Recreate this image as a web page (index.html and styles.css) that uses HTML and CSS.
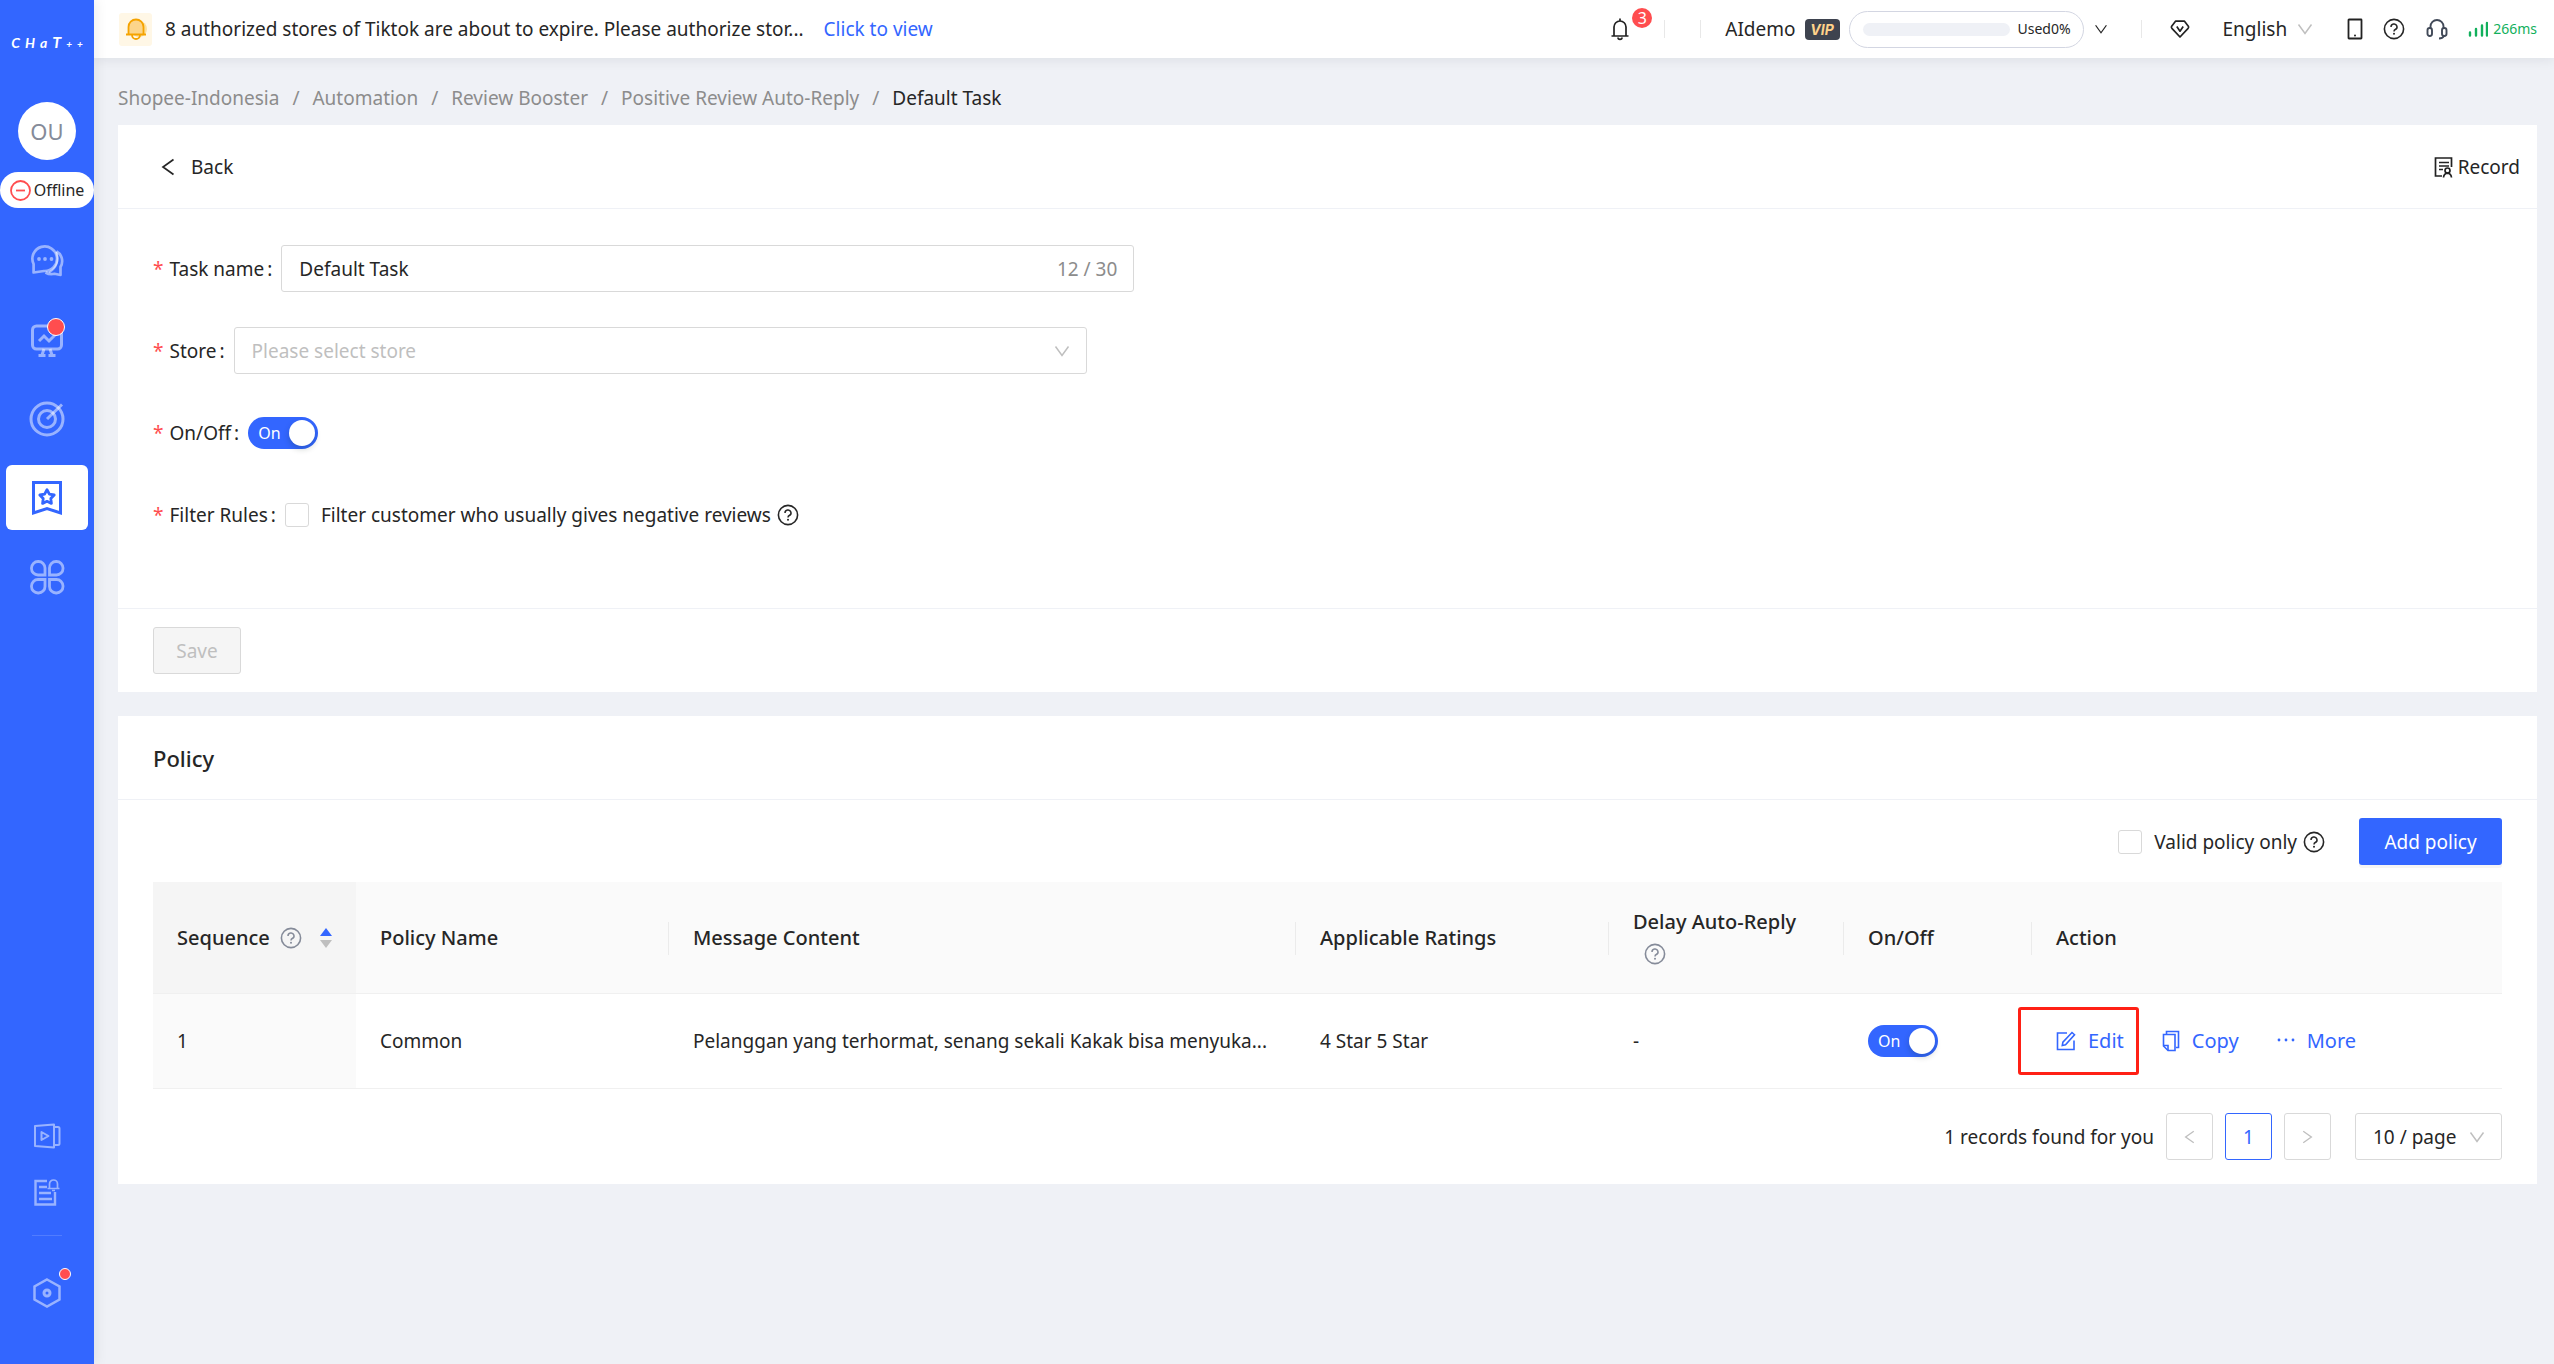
FILE: index.html
```html
<!DOCTYPE html>
<html lang="en">
<head>
<meta charset="utf-8">
<title>Default Task</title>
<link rel="stylesheet" href="styles.css">
</head>
<body>
<svg class="defs" aria-hidden="true">
  <symbol id="i-question" viewBox="0 0 22 22"><circle cx="11" cy="11" r="9.6" fill="none" stroke="currentColor" stroke-width="1.6"/><path d="M8 9a3 2.9 0 1 1 4.3 2.5c-.9.5-1.3.9-1.3 1.9" fill="none" stroke="currentColor" stroke-width="1.5"/><circle cx="11" cy="15.8" r="1" fill="currentColor"/></symbol>
  <symbol id="i-down" viewBox="0 0 16 12"><path d="M1.500 1.500 8 10.500 14.500 1.500" fill="none" stroke="currentColor" stroke-width="1.500"/></symbol>
  <symbol id="i-left" viewBox="0 0 14 18"><path d="M12.500 1.500 2 9l10.500 7.500" fill="none" stroke="currentColor" stroke-width="1.700"/></symbol>
</svg>
<div class="app">
  <nav class="side" aria-label="Main">
    <div class="logo"><span>C</span><span>H</span><span>a</span><span class="big">T</span><span class="plus">+</span><span class="plus">+</span></div>
    <div class="avatar">OU</div>
    <button class="status"><svg width="21" height="21" viewBox="0 0 21 21"><circle cx="10.500" cy="10.500" r="9.500" fill="none" stroke="#ff4d4f" stroke-width="1.800"/><path d="M6 10.500h9" stroke="#ff4d4f" stroke-width="1.800"/></svg>Offline</button>
    <div class="menu">
      <a href="#chat" aria-label="Chat"><svg width="36" height="36" viewBox="0 0 36 36" fill="none" stroke="currentColor" stroke-width="2.700" stroke-linejoin="round"><path d="M4.600 29.500V21A12.300 12.300 0 1 1 15 28z"/><path d="M27.500 8.500c5 2.500 7.500 9.500 4 15.500v8l-6-1.200c-3.500.8-6.500.2-9-1.300"/><path d="M27 9c3.500 7 1 16-7 20.500" stroke-width="2"/><g fill="currentColor" stroke="none"><circle cx="10" cy="16" r="1.900"/><circle cx="16" cy="16" r="1.900"/><circle cx="22.500" cy="16" r="1.900"/></g></svg></a>
      <a href="#monitor" aria-label="Monitor"><svg width="36" height="36" viewBox="0 0 36 36" fill="none" stroke="currentColor" stroke-width="3"><rect x="3.500" y="4" width="29" height="23" rx="4"/><path d="M10 19l5-5 5 5 6-6"/><path d="M15 27l-2 6M21 27l2 6M9.500 33.500h7M19.500 33.500h7"/></svg><span class="dot"></span></a>
      <a href="#target" aria-label="Target"><svg width="36" height="36" viewBox="0 0 36 36" fill="none" stroke="currentColor" stroke-width="3"><circle cx="18" cy="18" r="16"/><circle cx="18" cy="18" r="8.500"/><path d="M18 18 33 3.500"/></svg></a>
      <a href="#review" class="on" aria-label="Review"><svg width="36" height="36" viewBox="0 0 36 36" fill="none" stroke="currentColor" stroke-width="3"><path d="M4.500 2.500h27v30.500L18 28.500 4.500 33z"/><path d="M18 9.800l2.400 4.300 4.800.9-3.400 3.500.6 4.900-4.400-2.100-4.400 2.100.6-4.900-3.400-3.500 4.800-.9z" stroke-width="2.800" stroke-linejoin="round"/></svg></a>
      <a href="#apps" aria-label="Apps"><svg width="36" height="36" viewBox="0 0 36 36" fill="none" stroke="currentColor" stroke-width="2.800"><path d="M16 16H9A6.500 6.500 0 0 1 2.500 9.500V9A6.500 6.500 0 0 1 9 2.500h.5A6.500 6.500 0 0 1 16 9zM20.500 16h7A6.500 6.500 0 0 0 34 9.500V9A6.500 6.500 0 0 0 27.500 2.500H27A6.500 6.500 0 0 0 20.500 9zM16 20.500H9A6.500 6.500 0 0 0 2.500 27v.5A6.500 6.500 0 0 0 9 34h.5A6.500 6.500 0 0 0 16 27.500zM20.500 20.500h7A6.500 6.500 0 0 1 34 27v.5A6.500 6.500 0 0 1 27.500 34H27A6.500 6.500 0 0 1 20.500 27.500z"/></svg></a>
    </div>
    <div class="tools">
      <a href="#video" aria-label="Video"><svg width="28" height="28" viewBox="0 0 28 28" fill="none" stroke="currentColor" stroke-width="2" stroke-linejoin="round"><path d="M2 4l19-1.500v23L2 24zM21 5h4q1.500 0 1.500 1.500v15q0 1.500-1.500 1.500h-4M8.500 10v8l7-4z"/></svg></a>
      <a href="#news" aria-label="News"><svg width="28" height="28" viewBox="0 0 28 28" fill="none" stroke="currentColor" stroke-width="2.400"><path d="M14 3H2.500v23.500H22V14M6 9h8M6 15h12M6 21h13"/><path d="M14.500 10.500h12M16.500 10V6a4 4 0 0 1 8 0v4M19 12.500h3" stroke-width="1.700"/></svg></a>
      <hr>
      <a href="#settings" aria-label="Settings"><svg width="30" height="32" viewBox="0 0 30 32" fill="none" stroke="currentColor" stroke-width="2.500"><path d="M15 2.500 27.500 9.500v13L15 29.500 2.500 22.500v-13z"/><circle cx="15" cy="16" r="3" stroke-width="3"/></svg><span class="dot small"></span></a>
    </div>
  </nav>
  <div class="body">
    <header class="top">
      <span class="alert"><svg width="24" height="24" viewBox="0 0 24 24"><circle cx="15" cy="12" r="8" fill="#fcdf9c"/><path d="M4.500 17V10a7.500 7.500 0 0 1 15 0v7" fill="#fcd58a" stroke="#f5a300" stroke-width="1.800"/><path d="M2 17.500h20M8 18a4 4 0 0 0 8 0" fill="none" stroke="#f5a300" stroke-width="1.800"/></svg></span>
      <p class="notice">8 authorized stores of Tiktok are about to expire. Please authorize stor...</p>
      <a class="view" href="#expire">Click to view</a>
      <div class="right">
        <button class="bell" aria-label="Notifications"><svg width="20" height="24" viewBox="0 0 20 24" fill="none" stroke="#222" stroke-width="1.700"><path d="M4 18.500V10a6 6 0 0 1 12 0v8.500M1.500 19h17M10 1.500V4M8 20.500a2 1.800 0 0 0 4 0"/></svg><span class="count">3</span></button>
        <i class="bar"></i><i class="bar"></i>
        <span class="user">AIdemo</span><span class="vip">VIP</span>
        <button class="usage"><span class="track"></span>Used0%</button>
        <svg class="caret" width="14" height="10"><use href="#i-down"/></svg>
        <i class="bar"></i>
        <svg class="gem" width="20" height="20" viewBox="0 0 20 20" fill="none" stroke="#222" stroke-width="1.700" stroke-linejoin="round"><path d="M5.500 2.200h9l4 5.300q.3 1-.4 1.800L10 18 1.900 9.300q-.7-.8-.4-1.800z"/><path d="M6.800 7.500 10 12.200l3.200-4.700"/></svg>
        <button class="lang">English<svg width="16" height="12"><use href="#i-down"/></svg></button>
        <svg class="phone" width="16" height="22" viewBox="0 0 16 22"><rect x="1.500" y="1.500" width="13" height="19" rx=".5" fill="none" stroke="#222" stroke-width="1.800"/><circle cx="8" cy="17.500" r="1" fill="#222"/></svg>
        <svg class="help" width="22" height="22"><use href="#i-question"/></svg>
        <svg class="head" width="22" height="22" viewBox="0 0 22 22" fill="none" stroke="#414958" stroke-width="1.900"><path d="M4.500 10V8.500a6.500 6.500 0 0 1 13 0V10"/><rect x="1.500" y="10" width="4.500" height="8" rx="2.200"/><rect x="16" y="10" width="4.500" height="8" rx="2.200"/><path d="M18 18q-1.500 2.500-5 2.500"/></svg>
        <span class="ping"><svg width="20" height="16" viewBox="0 0 20 16" stroke="#12b05c" stroke-width="2.400" stroke-linecap="round"><path d="M2 11.500v3M8 8v6.500M14 4.500v10M19 2v12.500"/></svg>266ms</span>
      </div>
    </header>
    <main class="main">
      <nav class="crumbs" aria-label="Breadcrumb"><a href="#s">Shopee-Indonesia</a><i>/</i><a href="#a">Automation</a><i>/</i><a href="#r">Review Booster</a><i>/</i><a href="#p">Positive Review Auto-Reply</a><i>/</i><b>Default Task</b></nav>
      <section class="card">
        <div class="bar-top">
          <button class="back"><svg width="14" height="18"><use href="#i-left"/></svg>Back</button>
          <button class="record"><svg width="20" height="22" viewBox="0 0 20 22" fill="none" stroke="#222" stroke-width="1.700"><path d="M8 20H1.500V2h16v9M5 6.500h10M5 10h10M5 13.500h4"/><circle cx="13.500" cy="14.500" r="2.500"/><path d="M9.500 21.500q.5-4 4-4.300 3.500.3 4 4.300"/></svg>Record</button>
        </div>
        <form class="form">
          <div class="field"><label for="task"><em>*</em>Task name<s>:</s></label><span class="box"><input id="task" type="text" value="Default Task"><span class="hint">12 / 30</span></span></div>
          <div class="field"><label for="store"><em>*</em>Store<s>:</s></label><span class="box"><select id="store"><option>Please select store</option></select><svg width="16" height="12"><use href="#i-down"/></svg></span></div>
          <div class="field"><label for="onoff"><em>*</em>On/Off<s>:</s></label><label class="switch"><input id="onoff" type="checkbox" role="switch" checked><span>On</span></label></div>
          <div class="field"><span class="lab"><em>*</em>Filter Rules<s>:</s></span><input class="check" id="filter" type="checkbox"><label class="ctext" for="filter">Filter customer who usually gives negative reviews</label><svg width="22" height="22"><use href="#i-question"/></svg></div>
        </form>
        <div class="foot"><button class="save" disabled>Save</button></div>
      </section>
      <section class="card">
        <h2>Policy</h2>
        <div class="pbody">
          <div class="filters"><input class="check" id="valid" type="checkbox"><label class="ctext" for="valid">Valid policy only</label><svg width="22" height="22"><use href="#i-question"/></svg><button class="add">Add policy</button></div>
          <table>
            <colgroup><col class="c1"><col class="c2"><col class="c3"><col class="c2"><col class="c5"><col class="c6"><col></colgroup>
            <thead><tr>
              <th><span class="seq">Sequence<svg class="q" width="22" height="22"><use href="#i-question"/></svg><svg class="sort" width="12" height="20" viewBox="0 0 12 20"><path d="M6 0l6 8H0z" fill="#3366ff"/><path d="M6 20l6-8H0z" fill="#bfbfbf"/></svg></span></th>
              <th>Policy Name</th><th>Message Content</th><th>Applicable Ratings</th>
              <th>Delay Auto-Reply<svg class="q block" width="22" height="22"><use href="#i-question"/></svg></th><th>On/Off</th><th>Action</th>
            </tr></thead>
            <tbody><tr>
              <td>1</td><td>Common</td><td class="cut">Pelanggan yang terhormat, senang sekali Kakak bisa menyuka...</td><td>4 Star 5 Star</td><td>-</td>
              <td><label class="switch"><input type="checkbox" role="switch" aria-label="Policy on" checked><span>On</span></label></td>
              <td><span class="acts">
                <a href="#edit" class="edit"><svg width="20" height="20" viewBox="0 0 20 20" fill="none" stroke="currentColor" stroke-width="1.600"><path d="M11 2H1.500v16.500H18V9.500"/><path d="M16 1.500l2.500 2.200-9 10-3.200.8.600-3.300z"/></svg>Edit</a>
                <a href="#copy"><svg width="18" height="22" viewBox="0 0 18 22" fill="none" stroke="currentColor" stroke-width="1.600"><path d="M4.500 4V1.500h12v16H14"/><path d="M1.500 4.500h11.500v16H6L1.500 16z"/><path d="M1.500 15.500H6V20"/></svg>Copy</a>
                <a href="#more"><svg width="18" height="22" viewBox="0 0 18 22" fill="currentColor"><circle cx="2" cy="10" r="1.400"/><circle cx="9" cy="10" r="1.400"/><circle cx="16" cy="10" r="1.400"/></svg>More</a>
              </span></td>
            </tr></tbody>
          </table>
          <div class="pager"><span>1 records found for you</span>
            <button aria-label="Previous" disabled><svg width="11" height="14" viewBox="0 0 14 18"><use href="#i-left" width="14" height="18"/></svg></button>
            <button class="cur">1</button>
            <button aria-label="Next" disabled><svg class="flip" width="11" height="14" viewBox="0 0 14 18"><use href="#i-left" width="14" height="18"/></svg></button>
            <span class="box size"><select aria-label="Page size"><option>10 / page</option></select><svg width="16" height="12"><use href="#i-down"/></svg></span>
          </div>
        </div>
      </section>
    </main>
  </div>
</div>
</body>
</html>
```
FILE: styles.css
```css
* { box-sizing: border-box; }
body { margin: 0; font: 19px/32px "Noto Sans", "Open Sans", sans-serif; color: #262626; background: #eff1f6; }
button, input, select { font: inherit; color: inherit; margin: 0; }
button { background: none; border: 0; padding: 0; cursor: pointer; }
a { color: inherit; text-decoration: none; }
svg { flex: none; }
i, em, s, b { font-style: normal; text-decoration: none; font-weight: 400; }
.defs { position: absolute; width: 0; height: 0; }
.app { display: flex; min-height: 100vh; }

.side { width: 94px; flex: none; background: #3366ff; color: rgba(255,255,255,.5); display: flex; flex-direction: column; align-items: center; box-shadow: 2px 0 12px rgba(0,21,41,.08); z-index: 1; }
.logo { display: flex; align-items: baseline; gap: 5px; height: 32px; margin-top: 28px; color: #fff; font: italic 700 14px/28px Lato, sans-serif; }
.logo .big { font-size: 16px; }
.logo .plus { font-size: 10px; }
.avatar { width: 58px; height: 58px; margin-top: 42px; border-radius: 50%; background: #fff; color: #858b99; line-height: 58px; text-align: center; font-size: 22px; }
.status { width: 94px; height: 36px; margin-top: 12px; border-radius: 18px; background: #fff; color: #262626; font-size: 16px; line-height: 36px; display: flex; align-items: center; justify-content: center; gap: 3px; }
.menu { display: flex; flex-direction: column; gap: 14px; margin-top: 20px; }
.menu a { position: relative; width: 82px; height: 65px; border-radius: 6px; display: flex; align-items: center; justify-content: center; }
.menu .on { background: #fff; color: #3366ff; }
.dot { position: absolute; top: 11px; right: 23px; width: 18px; height: 18px; border-radius: 50%; background: #ff4d4f; border: 1px solid #fff; }
.dot.small { width: 12px; height: 12px; top: -9px; right: -9px; }
.tools { margin-top: auto; padding-bottom: 55px; display: flex; flex-direction: column; align-items: center; }
.tools a { position: relative; display: flex; margin-bottom: 28px; }
.tools a:last-child { margin: 0; }
.tools hr { width: 30px; height: 1px; border: 0; margin: 1px 0 41px; background: rgba(255,255,255,.15); }

.body { flex: 1; min-width: 0; }
.top { height: 58px; background: #fff; padding: 0 17px 0 25px; display: flex; align-items: center; box-shadow: 0 2px 12px rgba(0,21,41,.08); }
.alert { width: 33px; height: 33px; border-radius: 3px; background: #fff7e6; display: flex; align-items: center; justify-content: center; }
.notice { margin: 0 20px 0 13px; }
.view { color: #3366ff; }
.right { margin-left: auto; display: flex; align-items: center; }
.bell { position: relative; height: 24px; margin-right: 34px; }
.count { position: absolute; left: 22px; top: -9px; width: 20px; height: 20px; border-radius: 10px; background: #ff4d4f; color: #fff; font-size: 16px; line-height: 20px; }
.bar { width: 1px; height: 18px; background: #e8e8e8; margin-right: 35px; }
.bar + .user { margin-left: -11px; }
.vip { width: 35px; height: 21px; margin: 0 9px; border-radius: 4px; background: #3e434f; color: #ffd28a; font: italic 700 14px/21px Inter, sans-serif; text-align: center; }
.usage { width: 235px; height: 37px; border: 1px solid #d3d6e2; border-radius: 19px; padding: 0 12px 0 13px; display: flex; align-items: center; justify-content: space-between; font-size: 14px; }
.track { width: 147px; height: 13px; border-radius: 7px; background: #eff1f6; }
.caret { margin: 0 33px 0 10px; }
.caret + .bar { margin-right: 28px; }
.lang { display: flex; align-items: center; gap: 10px; margin: 0 34px 0 33px; }
.lang svg, .box svg { color: #bfbfbf; }
.help { margin: 0 21px 0 20px; }
.ping { display: flex; align-items: center; gap: 5px; margin-left: 20px; color: #12b05c; font-size: 14px; }

.main { padding: 0 17px 0 24px; }
.crumbs { padding: 24px 0 11px; display: flex; gap: 13px; color: #8c8c8c; }
.crumbs b { color: #262626; }
.card { background: #fff; margin-bottom: 24px; }
.bar-top { height: 84px; border-bottom: 1px solid #eff1f6; padding: 0 17px 0 43px; display: flex; align-items: center; justify-content: space-between; }
.back, .record { display: flex; align-items: center; gap: 16px; }
.record { gap: 4px; }
.form { padding: 36px 35px 70px; display: flex; flex-direction: column; gap: 35px; }
.field { height: 47px; display: flex; align-items: center; }
.field em { color: #ff4d4f; margin-right: 6px; }
.field s { margin: 0 9px 0 3px; }
.box { position: relative; width: 853px; height: 47px; display: flex; align-items: center; }
.box input, .box select { width: 100%; height: 100%; border: 1px solid #d9d9d9; border-radius: 3px; background: #fff; padding: 0 17px; appearance: none; outline: 0; }
.box select { color: #bfbfbf; }
.box svg { position: absolute; right: 17px; }
.hint { position: absolute; right: 17px; color: #8c8c8c; }
.switch { position: relative; width: 70px; height: 32px; display: block; }
.switch input { appearance: none; width: 70px; height: 32px; border-radius: 16px; background: #3366ff; display: block; }
.switch input::after { content: ""; position: absolute; top: 3px; right: 3px; width: 26px; height: 26px; border-radius: 50%; background: #fff; box-shadow: 0 3px 6px rgba(0,35,11,.2); }
.switch span { position: absolute; left: 10px; top: 0; color: #fff; font-size: 16px; }
.check { appearance: none; width: 24px; height: 24px; border: 1px solid #d9d9d9; border-radius: 3px; background: #fff; flex: none; }
.ctext { margin: 0 6px 0 12px; }
.foot { border-top: 1px solid #eff1f6; padding: 18px 35px; }
.save { display: block; width: 88px; height: 47px; border: 1px solid #d9d9d9; border-radius: 3px; background: #f5f5f5; color: #bfbfbf; }

h2 { margin: 0; height: 84px; padding: 0 35px; border-bottom: 1px solid #eff1f6; font-size: 22px; font-weight: 500; line-height: 84px; }
.pbody { padding: 18px 35px 24px; }
.filters { display: flex; align-items: center; justify-content: flex-end; height: 47px; margin-bottom: 17px; }
.add { width: 143px; height: 47px; margin-left: 34px; border-radius: 3px; background: #3366ff; color: #fff; box-shadow: 0 3px 0 rgba(0,0,0,.04); }
table { width: 100%; table-layout: fixed; border-collapse: separate; border-spacing: 0; }
.c1 { width: 203px; } .c2 { width: 313px; } .c3 { width: 627px; } .c5 { width: 235px; } .c6 { width: 188px; }
th, td { border-bottom: 1px solid #f0f0f0; padding: 0 24px; text-align: left; }
th { position: relative; height: 112px; background: #fafafa; font-size: 20px; font-weight: 500; white-space: nowrap; }
th:first-child { background: #f5f5f5; }
th:not(:first-child):not(:last-child)::after { content: ""; position: absolute; right: 0; top: 40px; width: 1px; height: 33px; background: #ebebeb; }
td { height: 95px; }
td:first-child { background: #fafafa; }
.seq { display: flex; align-items: center; }
.q { color: #858b99; margin-left: 10px; }
.sort { margin-left: 18px; }
.block { display: block; margin: 5px 0 4px 11px; }
.cut { white-space: nowrap; overflow: hidden; }
.acts { display: flex; gap: 38px; color: #3366ff; font-size: 20px; }
.acts a { position: relative; display: flex; align-items: center; gap: 12px; }
.edit::before { content: ""; position: absolute; inset: -18px -15px -18px -38px; border: 3px solid #ff2015; border-radius: 3px; }
.pager { display: flex; align-items: center; justify-content: flex-end; gap: 12px; margin-top: 24px; }
.pager button { width: 47px; height: 47px; border: 1px solid #d9d9d9; border-radius: 3px; color: #bfbfbf; }
.pager .cur { border-color: #3366ff; color: #3366ff; }
.flip { transform: scaleX(-1); }
.size { width: 147px; margin-left: 12px; }
.size select { color: inherit; }
```
